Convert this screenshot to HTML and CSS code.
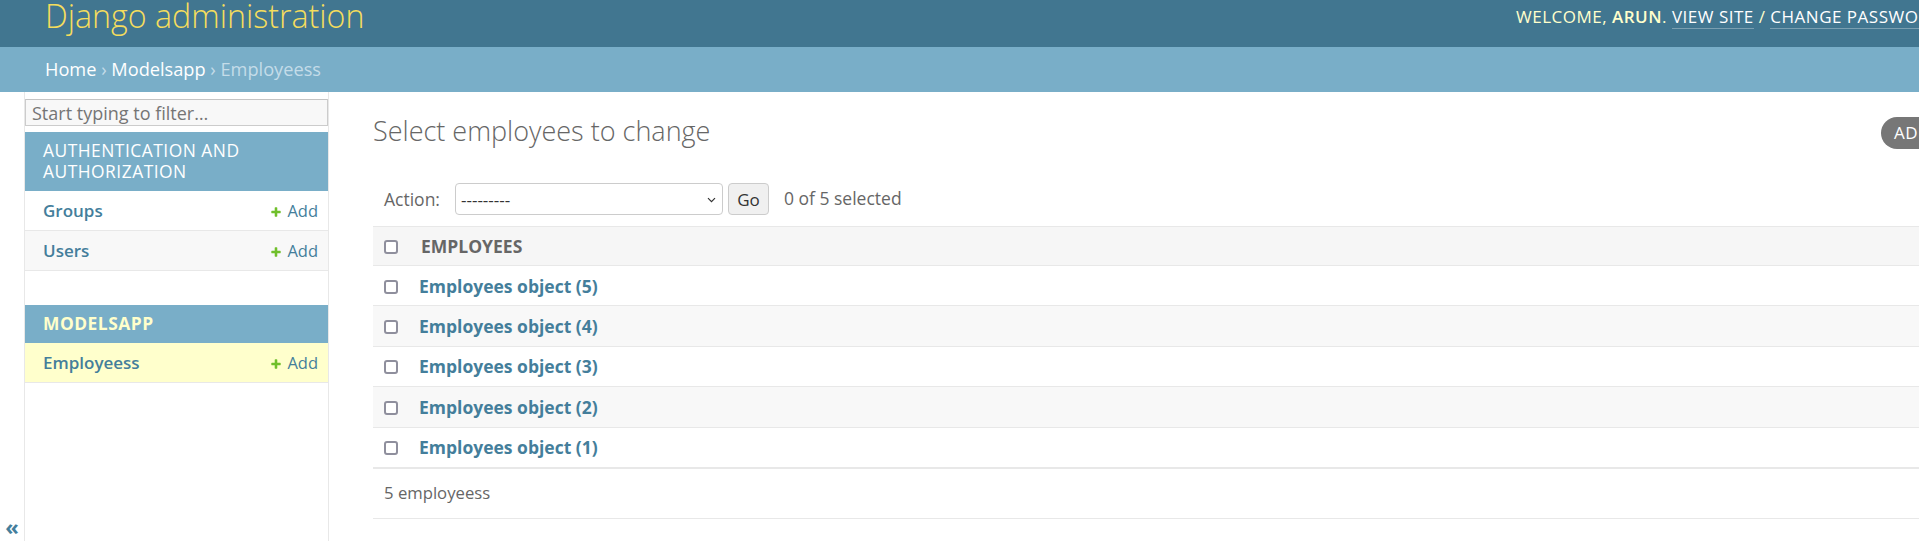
FILE: index.html
```html
<!DOCTYPE html>
<html lang="en">
<head>
<meta charset="utf-8">
<title>Select employees to change | Django site admin</title>
<link rel="stylesheet" href="styles.css">
</head>
<body>
<div class="page">
  <header class="site-header">
    <h1 class="site-name">Django administration</h1>
    <div class="user-tools">Welcome, <strong>arun</strong>. <a href="#">View site</a> / <a href="#">Change password</a> / <a href="#">Log out</a></div>
  </header>
  <nav class="breadcrumbs"><a href="#">Home</a> › <a href="#">Modelsapp</a> › Employeess</nav>
  <div class="main">
    <button class="toggle-nav" type="button">«</button>
    <aside class="nav-sidebar">
      <input class="nav-filter" type="search" placeholder="Start typing to filter…">
      <div class="module">
        <div class="module-caption">Authentication and Authorization</div>
        <div class="module-row">
          <a class="model-link" href="#">Groups</a>
          <a class="addlink" href="#"><svg class="plus" width="12" height="12" viewBox="0 0 1792 1792"><path fill="#70bf2b" d="M1600 796v192q0 40-28 68t-68 28h-416v416q0 40-28 68t-68 28h-192q-40 0-68-28t-28-68v-416h-416q-40 0-68-28t-28-68v-192q0-40 28-68t68-28h416v-416q0-40 28-68t68-28h192q40 0 68 28t28 68v416h416q40 0 68 28t28 68z"/></svg>Add</a>
        </div>
        <div class="module-row alt">
          <a class="model-link" href="#">Users</a>
          <a class="addlink" href="#"><svg class="plus" width="12" height="12" viewBox="0 0 1792 1792"><path fill="#70bf2b" d="M1600 796v192q0 40-28 68t-68 28h-416v416q0 40-28 68t-68 28h-192q-40 0-68-28t-28-68v-416h-416q-40 0-68-28t-28-68v-192q0-40 28-68t68-28h416v-416q0-40 28-68t68-28h192q40 0 68 28t28 68v416h416q40 0 68 28t28 68z"/></svg>Add</a>
        </div>
      </div>
      <div class="module">
        <div class="module-caption current">Modelsapp</div>
        <div class="module-row selected">
          <a class="model-link" href="#">Employeess</a>
          <a class="addlink" href="#"><svg class="plus" width="12" height="12" viewBox="0 0 1792 1792"><path fill="#70bf2b" d="M1600 796v192q0 40-28 68t-68 28h-416v416q0 40-28 68t-68 28h-192q-40 0-68-28t-28-68v-416h-416q-40 0-68-28t-28-68v-192q0-40 28-68t68-28h416v-416q0-40 28-68t68-28h192q40 0 68 28t28 68v416h416q40 0 68 28t28 68z"/></svg>Add</a>
        </div>
      </div>
    </aside>
    <section class="content">
      <div class="content-head">
        <h1 class="page-title">Select employees to change</h1>
        <div class="object-tools"><a class="tool-button" href="#">Add employees <svg class="tool-plus" width="12" height="12" viewBox="0 0 1792 1792"><path fill="#fff" d="M1600 796v192q0 40-28 68t-68 28h-416v416q0 40-28 68t-68 28h-192q-40 0-68-28t-28-68v-416h-416q-40 0-68-28t-28-68v-192q0-40 28-68t68-28h416v-416q0-40 28-68t68-28h192q40 0 68 28t28 68v416h416q40 0 68 28t28 68z"/></svg></a></div>
      </div>
      <form class="changelist">
        <div class="actions">
          <label class="action-label">Action:</label>
          <span class="select-wrap">
            <select class="action-select">
              <option>---------</option>
              <option>Delete selected employeess</option>
            </select>
            <svg class="chevron" width="9" height="6" viewBox="0 0 9 6"><path d="M1 1.2l3.5 3.5 3.5-3.5" fill="none" stroke="#333" stroke-width="1.2"/></svg>
          </span>
          <button class="go-button" type="button">Go</button>
          <span class="action-counter">0 of 5 selected</span>
        </div>
        <table class="result-list">
          <thead>
            <tr>
              <th class="check-col"><input class="cb" type="checkbox"></th>
              <th class="head-text">Employees</th>
            </tr>
          </thead>
          <tbody>
            <tr><td class="check-col"><input class="cb" type="checkbox"></td><th class="row-title"><a href="#">Employees object (5)</a></th></tr>
            <tr class="alt"><td class="check-col"><input class="cb" type="checkbox"></td><th class="row-title"><a href="#">Employees object (4)</a></th></tr>
            <tr><td class="check-col"><input class="cb" type="checkbox"></td><th class="row-title"><a href="#">Employees object (3)</a></th></tr>
            <tr class="alt"><td class="check-col"><input class="cb" type="checkbox"></td><th class="row-title"><a href="#">Employees object (2)</a></th></tr>
            <tr><td class="check-col"><input class="cb" type="checkbox"></td><th class="row-title"><a href="#">Employees object (1)</a></th></tr>
          </tbody>
        </table>
        <p class="paginator">5 employeess</p>
      </form>
    </section>
  </div>
</div>
</body>
</html>
```

FILE: styles.css
```css
html, body {
  margin: 0;
  padding: 0;
  height: 100%;
  overflow: hidden;
}

body {
  font-family: "Open Sans", "Noto Sans", sans-serif;
  color: #333;
  background: #fff;
}

a {
  text-decoration: none;
}

.page {
  width: 2095px;
  height: 541px;
  display: flex;
  flex-direction: column;
}

/* Header */
.site-header {
  flex: 0 0 47px;
  box-sizing: border-box;
  background: #417690;
  display: flex;
  justify-content: space-between;
  align-items: flex-start;
  padding: 0 45px;
}

.site-name {
  margin: 0;
  font-size: 32.2px;
  font-weight: 300;
  line-height: 32px;
  color: #f5dd5d;
}

.user-tools {
  width: 534px;
  margin-top: 7px;
  font-size: 17px;
  line-height: 20px;
  letter-spacing: 0.5px;
  text-transform: uppercase;
  color: #ffc;
  white-space: nowrap;
}

.user-tools strong {
  font-weight: 600;
}

.user-tools a {
  color: #fff;
  border-bottom: 1px solid rgba(255, 255, 255, 0.3);
}

/* Breadcrumbs */
.breadcrumbs {
  flex: 0 0 45px;
  box-sizing: border-box;
  background: #79aec8;
  padding: 10px 45px;
  font-size: 18.2px;
  line-height: 25px;
  color: #c4dce8;
}

.breadcrumbs a {
  color: #fff;
}

/* Main */
.main {
  flex: 1;
  display: flex;
  min-height: 0;
}

.toggle-nav {
  flex: 0 0 24px;
  width: 24px;
  box-sizing: content-box;
  border: 0;
  border-right: 1px solid #e8e8e8;
  background: #fff;
  padding: 0 0 4px;
  display: flex;
  align-items: flex-end;
  justify-content: center;
  font-family: "Open Sans", sans-serif;
  font-size: 22px;
  font-weight: 700;
  line-height: 22px;
  color: #447e9b;
}

.nav-sidebar {
  flex: 0 0 303px;
  border-right: 1px solid #e8e8e8;
}

.nav-filter {
  display: block;
  width: 100%;
  box-sizing: border-box;
  height: 27px;
  margin: 7px 0 6px;
  border: 1px solid #ccc;
  border-top-color: #c4c4c4;
  background: #f8f8f8;
  padding: 0 6px;
  font-family: "Open Sans", sans-serif;
  font-size: 18px;
  color: #333;
  outline: none;
}

.nav-filter::placeholder {
  color: #757575;
}

.module {
  margin-bottom: 34px;
}

.module-caption {
  background: #79aec8;
  padding: 8px 18px 9px;
  font-size: 17.4px;
  line-height: 21px;
  letter-spacing: 0.5px;
  text-transform: uppercase;
  color: #fff;
}

.module-caption.current {
  color: #ffc;
  font-weight: 700;
}

.module-row {
  display: flex;
  justify-content: space-between;
  align-items: baseline;
  padding: 9px 10px 9px 18px;
  border-bottom: 1px solid #e8e8e8;
  line-height: 21px;
}

.module-row.alt {
  background: #f8f8f8;
}

.module-row.selected {
  background: #ffc;
}

.model-link {
  font-size: 17px;
  font-weight: 600;
  color: #447e9b;
}

.addlink {
  font-size: 16.5px;
  color: #447e9b;
}

.plus {
  margin-right: 5px;
  vertical-align: -1px;
}

/* Content */
.content {
  flex: 1;
  min-width: 0;
  padding: 23px 44px 0;
}

.content-head {
  display: flex;
  justify-content: space-between;
  align-items: flex-start;
}

.page-title {
  margin: 0;
  font-size: 27px;
  font-weight: 300;
  line-height: 32px;
  color: #666;
}

.object-tools {
  width: 170px;
  margin-top: 2px;
}

.tool-button {
  display: block;
  height: 32px;
  line-height: 32px;
  padding: 0 13px;
  border-radius: 16px;
  background: #777;
  color: #fff;
  font-size: 17px;
  letter-spacing: 0.5px;
  text-transform: uppercase;
  white-space: nowrap;
}

.tool-plus {
  margin-left: 4px;
}

.changelist {
  margin: 0;
}

.actions {
  margin-top: 23px;
  padding: 11px;
  display: flex;
  align-items: center;
  font-size: 17.5px;
  line-height: 24px;
  color: #666;
}

.action-label {
  margin-right: 15px;
}

.select-wrap {
  position: relative;
  display: block;
  width: 268px;
  height: 32px;
}

.action-select {
  appearance: none;
  -webkit-appearance: none;
  width: 100%;
  height: 32px;
  box-sizing: border-box;
  border: 1px solid #ccc;
  border-radius: 4px;
  background: #fff;
  padding: 0 24px 0 5px;
  font-family: "Open Sans", sans-serif;
  font-size: 17px;
  color: #333;
}

.chevron {
  position: absolute;
  right: 7px;
  top: 14px;
}

.go-button {
  margin-left: 5px;
  width: 41px;
  height: 32px;
  box-sizing: border-box;
  border: 1px solid #ccc;
  border-radius: 4px;
  background: #f0f0f0;
  padding: 0;
  font-family: "Open Sans", sans-serif;
  font-size: 17px;
  color: #333;
}

.action-counter {
  margin-left: 15px;
  margin-top: -3px;
}

.result-list {
  width: 100%;
  border-collapse: collapse;
}

.result-list thead th {
  background: #f6f6f6;
  border-top: 1px solid #e8e8e8;
  border-bottom: 1px solid #e8e8e8;
  padding: 8px 11px;
  line-height: 22px;
  text-align: left;
}

.check-col {
  width: 14px;
  padding: 8.7px 10px 8.7px 11px;
}

.result-list thead th.check-col {
  padding-right: 10px;
}

.head-text {
  width: 100%;
  font-size: 17.5px;
  font-weight: 700;
  text-transform: uppercase;
  color: #666;
}

.result-list thead th.head-text {
  padding-left: 13px;
}

.result-list tbody td,
.result-list tbody th {
  padding: 8.7px 11px;
  font-size: 17.5px;
  line-height: 22px;
  border-bottom: 1px solid #e8e8e8;
  text-align: left;
}

.result-list tbody td.check-col {
  padding-right: 10px;
}

.result-list tbody tr.alt {
  background: #f8f8f8;
}

.row-title a {
  font-weight: 700;
  color: #447e9b;
}

.cb {
  appearance: none;
  -webkit-appearance: none;
  display: block;
  width: 14px;
  height: 14px;
  box-sizing: border-box;
  margin: 5px 0 3px;
  border: 2px solid #8f8f9d;
  border-radius: 3px;
  background: #fff;
}

.paginator {
  margin: 0;
  border-top: 1px solid #e8e8e8;
  border-bottom: 1px solid #e8e8e8;
  padding: 12.5px 11px;
  font-size: 16.7px;
  line-height: 24px;
  color: #666;
}
```
